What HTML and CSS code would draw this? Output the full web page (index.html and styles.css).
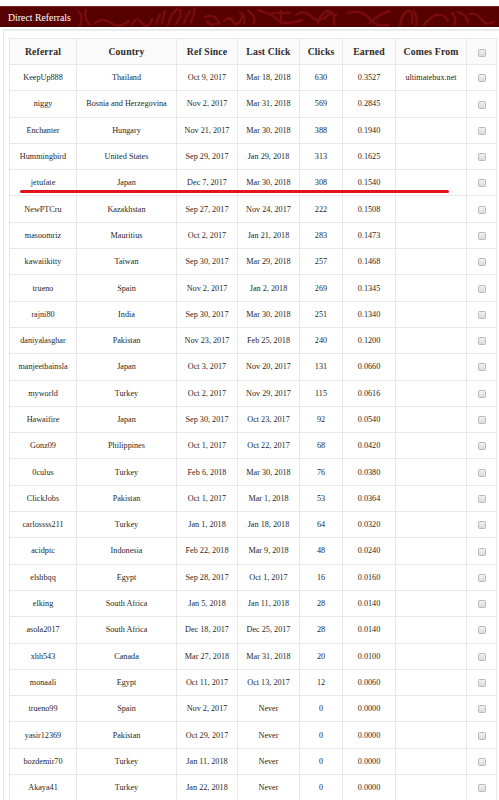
FILE: index.html
```html
<!DOCTYPE html>
<html lang="en">
<head>
<meta charset="utf-8">
<title>Direct Referrals</title>
<link rel="stylesheet" href="styles.css">
</head>
<body>
<div class="page">
  <div class="titlebar">
    <svg class="titlebar-art" width="499" height="21" viewBox="0 0 499 21" aria-hidden="true">
      <g fill="none" stroke="#780b0b" stroke-width="2.4" stroke-linecap="round">
        <path d="M78 4 q6 6 2 14 M86 3 q-3 8 4 15"/>
        <path d="M95 16 q8 -6 16 0 q8 6 18 -2"/>
        <path d="M132 18 q4 -10 10 -2 q6 8 10 -4"/>
        <path d="M156 17 l4 -10 M162 16 l3 -12"/>
        <path d="M168 18 q4 -14 10 -16 M180 3 q2 6 -4 14"/>
        <path d="M184 16 q3 -8 6 -12 M191 15 q4 -9 3 -13"/>
        <path d="M205 10 q10 -4 14 6 q-8 4 -12 -2"/>
        <path d="M224 14 q6 -6 10 2 q5 4 9 -8"/>
        <path d="M240 6 q6 2 4 10 M248 4 q8 4 6 12"/>
        <path d="M258 3 q14 4 20 10 q6 6 24 0"/>
        <path d="M272 6 h18 M281 4 v12"/>
        <path d="M296 8 q8 -6 16 2 q6 6 14 0 q4 -6 10 -2"/>
        <path d="M318 16 q4 -12 10 -12 q8 2 6 14"/>
        <path d="M348 6 q14 -4 22 6 q6 8 18 6"/>
        <path d="M370 16 q10 -10 20 -12"/>
        <path d="M400 18 q2 -12 8 -14 q6 0 4 12 M414 4 q4 8 2 14"/>
        <path d="M424 18 q6 -8 12 -10 q8 -2 12 6"/>
        <path d="M452 6 q6 6 2 12 M458 5 q8 2 10 10 M470 7 q6 -2 12 6 q4 6 12 2"/>
      </g>
    </svg>
    <span class="titlebar-text">Direct Referrals</span>
  </div>

  <div class="panel">
    <table class="refs">
      <colgroup>
        <col class="c-ref"><col class="c-country"><col class="c-since"><col class="c-last">
        <col class="c-clicks"><col class="c-earned"><col class="c-from"><col class="c-check">
      </colgroup>
      <thead>
        <tr>
          <th>Referral</th><th>Country</th><th>Ref Since</th><th>Last Click</th>
          <th>Clicks</th><th>Earned</th><th>Comes From</th><th><span class="box"></span></th>
        </tr>
      </thead>
      <tbody>
        <tr><td>KeepUp888</td><td>Thailand</td><td>Oct 9, 2017</td><td>Mar 18, 2018</td><td>630</td><td>0.3527</td><td>ultimatebux.net</td><td><span class="box"></span></td></tr>
        <tr><td>niggy</td><td>Bosnia and Herzegovina</td><td>Nov 2, 2017</td><td>Mar 31, 2018</td><td>569</td><td>0.2845</td><td></td><td><span class="box"></span></td></tr>
        <tr><td>Enchanter</td><td>Hungary</td><td>Nov 21, 2017</td><td>Mar 30, 2018</td><td>388</td><td>0.1940</td><td></td><td><span class="box"></span></td></tr>
        <tr><td>Hummingbird</td><td>United States</td><td>Sep 29, 2017</td><td>Jan 29, 2018</td><td>313</td><td>0.1625</td><td></td><td><span class="box"></span></td></tr>
        <tr><td>jetufate</td><td>Japan</td><td>Dec 7, 2017</td><td>Mar 30, 2018</td><td>308</td><td>0.1540</td><td></td><td><span class="box"></span></td></tr>
        <tr><td>NewPTCru</td><td>Kazakhstan</td><td>Sep 27, 2017</td><td>Nov 24, 2017</td><td>222</td><td>0.1508</td><td></td><td><span class="box"></span></td></tr>
        <tr><td>masoomriz</td><td>Mauritius</td><td>Oct 2, 2017</td><td>Jan 21, 2018</td><td>283</td><td>0.1473</td><td></td><td><span class="box"></span></td></tr>
        <tr><td>kawaiikitty</td><td>Taiwan</td><td>Sep 30, 2017</td><td>Mar 29, 2018</td><td>257</td><td>0.1468</td><td></td><td><span class="box"></span></td></tr>
        <tr><td>trueno</td><td>Spain</td><td>Nov 2, 2017</td><td>Jan 2, 2018</td><td>269</td><td>0.1345</td><td></td><td><span class="box"></span></td></tr>
        <tr><td>rajni80</td><td>India</td><td>Sep 30, 2017</td><td>Mar 30, 2018</td><td>251</td><td>0.1340</td><td></td><td><span class="box"></span></td></tr>
        <tr><td>daniyalasghar</td><td>Pakistan</td><td>Nov 23, 2017</td><td>Feb 25, 2018</td><td>240</td><td>0.1200</td><td></td><td><span class="box"></span></td></tr>
        <tr><td>manjeetbainsla</td><td>Japan</td><td>Oct 3, 2017</td><td>Nov 20, 2017</td><td>131</td><td>0.0660</td><td></td><td><span class="box"></span></td></tr>
        <tr><td>myworld</td><td>Turkey</td><td>Oct 2, 2017</td><td>Nov 29, 2017</td><td>115</td><td>0.0616</td><td></td><td><span class="box"></span></td></tr>
        <tr><td>Hawaifire</td><td>Japan</td><td>Sep 30, 2017</td><td>Oct 23, 2017</td><td>92</td><td>0.0540</td><td></td><td><span class="box"></span></td></tr>
        <tr><td>Gonz09</td><td>Philippines</td><td>Oct 1, 2017</td><td>Oct 22, 2017</td><td>68</td><td>0.0420</td><td></td><td><span class="box"></span></td></tr>
        <tr><td>0culus</td><td>Turkey</td><td>Feb 6, 2018</td><td>Mar 30, 2018</td><td>76</td><td>0.0380</td><td></td><td><span class="box"></span></td></tr>
        <tr><td>ClickJobs</td><td>Pakistan</td><td>Oct 1, 2017</td><td>Mar 1, 2018</td><td>53</td><td>0.0364</td><td></td><td><span class="box"></span></td></tr>
        <tr><td>carlossss211</td><td>Turkey</td><td>Jan 1, 2018</td><td>Jan 18, 2018</td><td>64</td><td>0.0320</td><td></td><td><span class="box"></span></td></tr>
        <tr><td>acidptc</td><td>Indonesia</td><td>Feb 22, 2018</td><td>Mar 9, 2018</td><td>48</td><td>0.0240</td><td></td><td><span class="box"></span></td></tr>
        <tr><td>elshbqq</td><td>Egypt</td><td>Sep 28, 2017</td><td>Oct 1, 2017</td><td>16</td><td>0.0160</td><td></td><td><span class="box"></span></td></tr>
        <tr><td>elking</td><td>South Africa</td><td>Jan 5, 2018</td><td>Jan 11, 2018</td><td>28</td><td>0.0140</td><td></td><td><span class="box"></span></td></tr>
        <tr><td>asola2017</td><td>South Africa</td><td>Dec 18, 2017</td><td>Dec 25, 2017</td><td>28</td><td>0.0140</td><td></td><td><span class="box"></span></td></tr>
        <tr><td>xhh543</td><td>Canada</td><td>Mar 27, 2018</td><td>Mar 31, 2018</td><td>20</td><td>0.0100</td><td></td><td><span class="box"></span></td></tr>
        <tr><td>monaali</td><td>Egypt</td><td>Oct 11, 2017</td><td>Oct 13, 2017</td><td>12</td><td>0.0060</td><td></td><td><span class="box"></span></td></tr>
        <tr><td>trueno99</td><td>Spain</td><td>Nov 2, 2017</td><td>Never</td><td>0</td><td>0.0000</td><td></td><td><span class="box"></span></td></tr>
        <tr><td>yasir12369</td><td>Pakistan</td><td>Oct 29, 2017</td><td>Never</td><td>0</td><td>0.0000</td><td></td><td><span class="box"></span></td></tr>
        <tr><td>bozdemir70</td><td>Turkey</td><td>Jan 11, 2018</td><td>Never</td><td>0</td><td>0.0000</td><td></td><td><span class="box"></span></td></tr>
        <tr><td>Akaya41</td><td>Turkey</td><td>Jan 22, 2018</td><td>Never</td><td>0</td><td>0.0000</td><td></td><td><span class="box"></span></td></tr>
      </tbody>
    </table>
  </div>

  <div class="underline-mark"></div>
</div>
</body>
</html>
```

FILE: styles.css
```css
html {
  overflow: hidden;
}

body {
  margin: 0;
  background: #ffffff;
  font-family: "Liberation Serif", "Times New Roman", serif;
  color: #333333;
}

.page {
  position: relative;
  width: 499px;
  padding-top: 6px;
}

.titlebar {
  position: relative;
  height: 21px;
  background: #570000;
  border-top: 1px solid #7a1d1d;
  box-sizing: border-box;
  display: flex;
  align-items: center;
  padding-left: 8px;
  overflow: hidden;
}

.titlebar-art {
  position: absolute;
  left: 0;
  top: 0;
}

.titlebar-text {
  position: relative;
  color: #ffffff;
  font-family: "Liberation Serif", "Times New Roman", serif;
  font-size: 9.8px;
  line-height: 1;
  padding-top: 1px;
}

.panel {
  margin-top: 2px;
  margin-left: 3px;
  width: 506px;
  border: 1px solid #e6e6e6;
  border-top: 2px solid #ececec;
  padding: 7px 0 0 5px;
  box-sizing: border-box;
  background: #ffffff;
}

.refs {
  border-collapse: collapse;
  table-layout: fixed;
  width: 487px;
  border: 1px solid #e3e3e3;
  font-family: "Liberation Serif", "Times New Roman", serif;
}

.c-ref { width: 67px; }
.c-country { width: 100px; }
.c-since { width: 61px; }
.c-last { width: 62px; }
.c-clicks { width: 43px; }
.c-earned { width: 53px; }
.c-from { width: 71px; }
.c-check { width: 30px; }

.refs th,
.refs td {
  border: 1px solid #e8e8e8;
  padding: 0;
  text-align: center;
  vertical-align: middle;
  white-space: nowrap;
  overflow: hidden;
}

.refs th {
  height: 25px;
  font-size: 9.7px;
  font-weight: bold;
  color: #2b2b2b;
  background: #fafafa;
  letter-spacing: 0.15px;
}

.refs td {
  height: 25.3px;
  font-size: 8.2px;
  color: #1f1f1f;
}

.box {
  display: inline-block;
  width: 6px;
  height: 6px;
  border: 1px solid #b9b9b9;
  border-radius: 1.5px;
  background: linear-gradient(#f2f2f2, #dcdcdc);
  vertical-align: middle;
  margin-left: 1px;
}

.underline-mark {
  position: absolute;
  left: 20px;
  top: 189.5px;
  width: 429px;
  height: 3.4px;
  border-radius: 2px;
  background: #e3121c;
}
```
